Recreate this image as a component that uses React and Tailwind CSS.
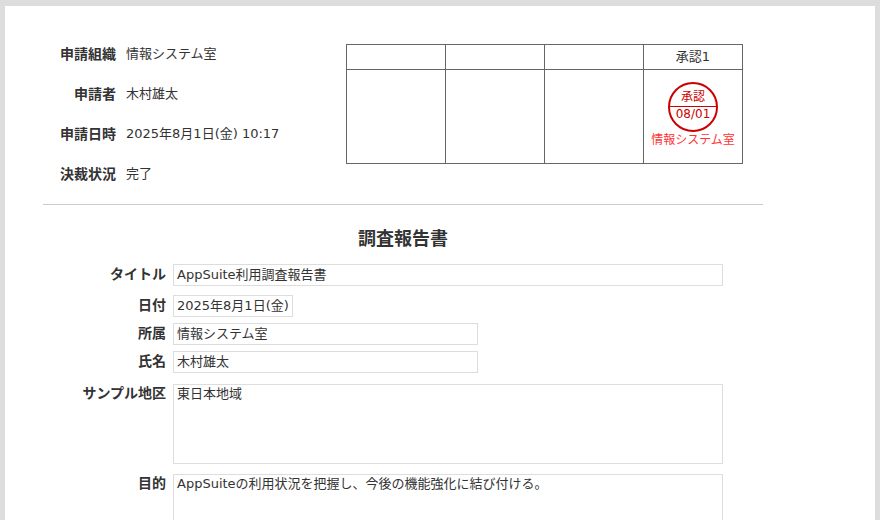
const FONT = "font-['DejaVu_Sans','Noto_Sans_CJK_JP',sans-serif]";

function InfoRow({ label, children }) {
  return (
    <div className="flex h-10 items-start">
      <div className="w-[73px] text-right text-[14px] leading-5 font-bold text-[#333]">{label}</div>
      <div className="ml-[10px] text-[13px] leading-5 text-[#333]">{children}</div>
    </div>
  );
}

function Field({ label, width, height, mt, lead = "leading-5", children }) {
  return (
    <div className={`flex items-start ${mt}`}>
      <div className={`w-[123px] text-right text-[14px] font-bold text-[#333] ${lead}`}>{label}</div>
      <div className={`ml-[7px] border border-[#ddd] px-[3px] text-[13px] text-[#333] ${lead} ${width} ${height}`}>
        {children}
      </div>
    </div>
  );
}

function Stamp() {
  return (
    <div className="mb-[4px] flex flex-col items-center">
      <div className="flex h-[50px] w-[50px] flex-col items-center overflow-hidden rounded-full border-2 border-[#c00] text-[12px] leading-4 text-[#c00]">
        <div className="flex h-[22px] items-end pb-px">承認</div>
        <div className="h-px w-full bg-[#c00]" />
        <div className="leading-[14px]">08/01</div>
      </div>
      <div className="mt-0 text-[12px] leading-4 whitespace-nowrap text-[#f33]">情報システム室</div>
    </div>
  );
}

export default function App() {
  const cols = [0, 1, 2];
  return (
    <div className={`h-[520px] overflow-hidden bg-[#ddd] pt-[6px] pr-[5px] pl-[5px] ${FONT}`}>
      <div className="h-full bg-white pt-[38px] pl-[38px]">
        <div className="flex w-[720px] items-start justify-between">
          <div className="w-[300px]">
            <InfoRow label="申請組織">情報システム室</InfoRow>
            <InfoRow label="申請者">木村雄太</InfoRow>
            <InfoRow label="申請日時">2025年8月1日(金) 10:17</InfoRow>
            <InfoRow label="決裁状況">完了</InfoRow>
          </div>
          <table className="mr-[20px] w-[397px] table-fixed border-collapse text-[13px] text-[#333]">
            <tbody>
              <tr className="h-[25px]">
                {cols.map((c) => (
                  <td key={c} className="border border-[#666]" />
                ))}
                <td className="border border-[#666] text-center">承認1</td>
              </tr>
              <tr className="h-[94px]">
                {cols.map((c) => (
                  <td key={c} className="border border-[#666]" />
                ))}
                <td className="border border-[#666] align-middle">
                  <Stamp />
                </td>
              </tr>
            </tbody>
          </table>
        </div>
        <div className="h-px w-[720px] bg-[#ccc]" />
        <div className="mt-[22px] w-[720px] text-center text-[18px] leading-6 font-bold text-[#333]">調査報告書</div>
        <div className="mt-[13px] w-[720px]">
          <Field label="タイトル" width="w-[550px]" height="h-[22px]">AppSuite利用調査報告書</Field>
          <Field label="日付" width="w-fit" height="h-[22px]" mt="mt-[9px]">2025年8月1日(金)</Field>
          <Field label="所属" width="w-[305px]" height="h-[22px]" mt="mt-[6px]">情報システム室</Field>
          <Field label="氏名" width="w-[305px]" height="h-[22px]" mt="mt-[6px]">木村雄太</Field>
          <Field label="サンプル地区" width="w-[550px]" height="h-20" mt="mt-[11px]" lead="leading-[18px]">東日本地域</Field>
          <Field label="目的" width="w-[550px]" height="h-20" mt="mt-[10px]" lead="leading-[18px]">AppSuiteの利用状況を把握し、今後の機能強化に結び付ける。</Field>
        </div>
      </div>
    </div>
  );
}
